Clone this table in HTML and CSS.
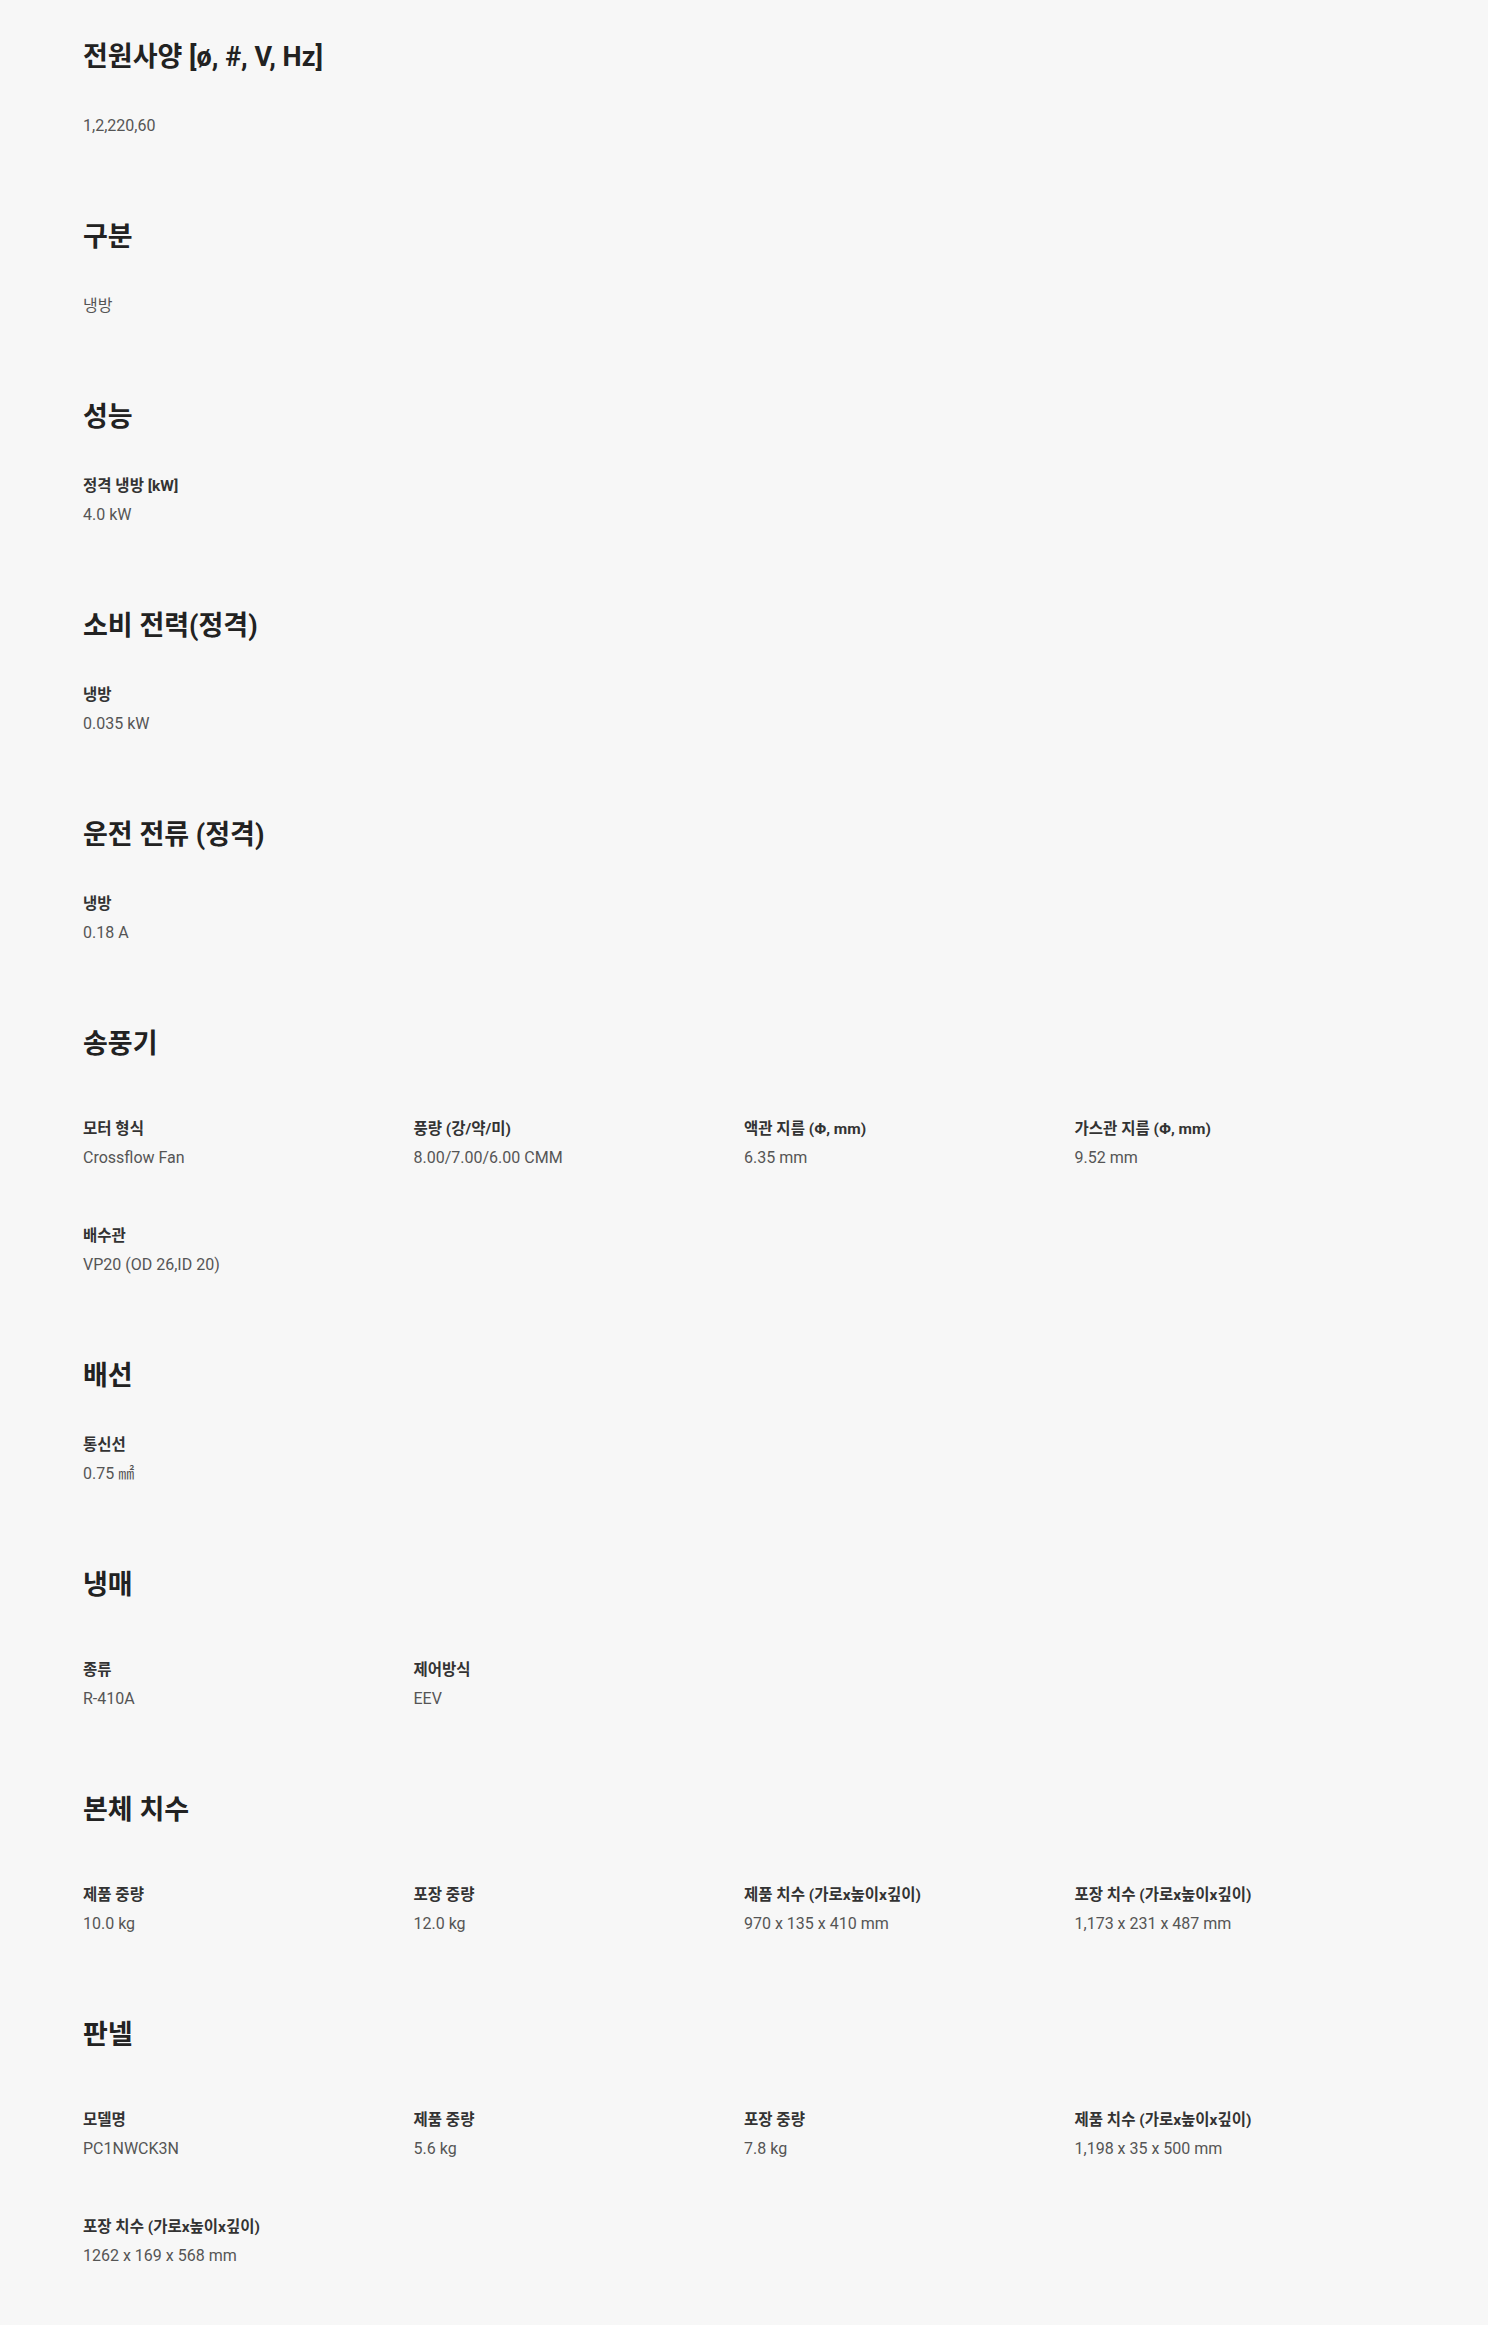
FILE: index.html
```html
<!DOCTYPE html>
<html lang="ko">
<head>
    <meta charset="UTF-8">
    <meta name="viewport" content="width=device-width, initial-scale=1.0">
    <title>제품 사양</title>
    <link rel="stylesheet" href="styles.css">
</head>
<body>
    <div class="spec">
        <div class="spec-section">
            <h3>전원사양 [ø, #, V, Hz]</h3>
            <div class="spec-body">
                <p class="value">1,2,220,60</p>
            </div>
        </div>

        <div class="spec-section">
            <h3>구분</h3>
            <div class="spec-body">
                <p class="value">냉방</p>
            </div>
        </div>

        <div class="spec-section">
            <h3>성능</h3>
            <div class="spec-body">
                <p class="label">정격 냉방 [kW]</p>
                <p class="value">4.0 kW</p>
            </div>
        </div>

        <div class="spec-section">
            <h3>소비 전력(정격)</h3>
            <div class="spec-body">
                <p class="label">냉방</p>
                <p class="value">0.035 kW</p>
            </div>
        </div>

        <div class="spec-section">
            <h3>운전 전류 (정격)</h3>
            <div class="spec-body">
                <p class="label">냉방</p>
                <p class="value">0.18 A</p>
            </div>
        </div>

        <div class="spec-section">
            <h3>송풍기</h3>
            <ul class="spec-grid">
                <li><p class="label">모터 형식</p><p class="value">Crossflow Fan</p></li>
                <li><p class="label">풍량 (강/약/미)</p><p class="value">8.00/7.00/6.00 CMM</p></li>
                <li><p class="label">액관 지름 (Φ, mm)</p><p class="value">6.35 mm</p></li>
                <li><p class="label">가스관 지름 (Φ, mm)</p><p class="value">9.52 mm</p></li>
                <li><p class="label">배수관</p><p class="value">VP20 (OD 26,ID 20)</p></li>
            </ul>
        </div>

        <div class="spec-section">
            <h3>배선</h3>
            <div class="spec-body">
                <p class="label">통신선</p>
                <p class="value">0.75 ㎟</p>
            </div>
        </div>

        <div class="spec-section">
            <h3>냉매</h3>
            <ul class="spec-grid">
                <li><p class="label">종류</p><p class="value">R-410A</p></li>
                <li><p class="label">제어방식</p><p class="value">EEV</p></li>
            </ul>
        </div>

        <div class="spec-section">
            <h3>본체 치수</h3>
            <ul class="spec-grid">
                <li><p class="label">제품 중량</p><p class="value">10.0 kg</p></li>
                <li><p class="label">포장 중량</p><p class="value">12.0 kg</p></li>
                <li><p class="label">제품 치수 (가로x높이x깊이)</p><p class="value">970 x 135 x 410 mm</p></li>
                <li><p class="label">포장 치수 (가로x높이x깊이)</p><p class="value">1,173 x 231 x 487 mm</p></li>
            </ul>
        </div>

        <div class="spec-section">
            <h3>판넬</h3>
            <ul class="spec-grid">
                <li><p class="label">모델명</p><p class="value">PC1NWCK3N</p></li>
                <li><p class="label">제품 중량</p><p class="value">5.6 kg</p></li>
                <li><p class="label">포장 중량</p><p class="value">7.8 kg</p></li>
                <li><p class="label">제품 치수 (가로x높이x깊이)</p><p class="value">1,198 x 35 x 500 mm</p></li>
                <li><p class="label">포장 치수 (가로x높이x깊이)</p><p class="value">1262 x 169 x 568 mm</p></li>
            </ul>
        </div>
    </div>
</body>
</html>
```

FILE: styles.css
```css
body {
    margin: 0;
    background-color: #f7f7f7;
    font-family: Roboto, "Noto Sans CJK KR", sans-serif;
    color: #222;
}
.spec {
    padding: 38px 83px 60px;
}
.spec-section {
    margin-bottom: 80px;
}
.spec-section:last-child {
    margin-bottom: 0;
}
h3 {
    margin: 0;
    font-size: 27px;
    line-height: 38px;
    font-weight: 700;
    color: #222;
}
.spec-body {
    margin-top: 38px;
}
.spec-grid {
    list-style: none;
    margin: 54px 0 0;
    padding: 0;
    display: grid;
    grid-template-columns: repeat(4, 1fr);
    row-gap: 54px;
}
p {
    margin: 0;
}
.label {
    font-size: 15.5px;
    line-height: 24px;
    font-weight: 700;
    color: #333;
    margin-bottom: 5px;
}
.value {
    font-size: 16px;
    line-height: 24px;
    color: #555;
}
```
